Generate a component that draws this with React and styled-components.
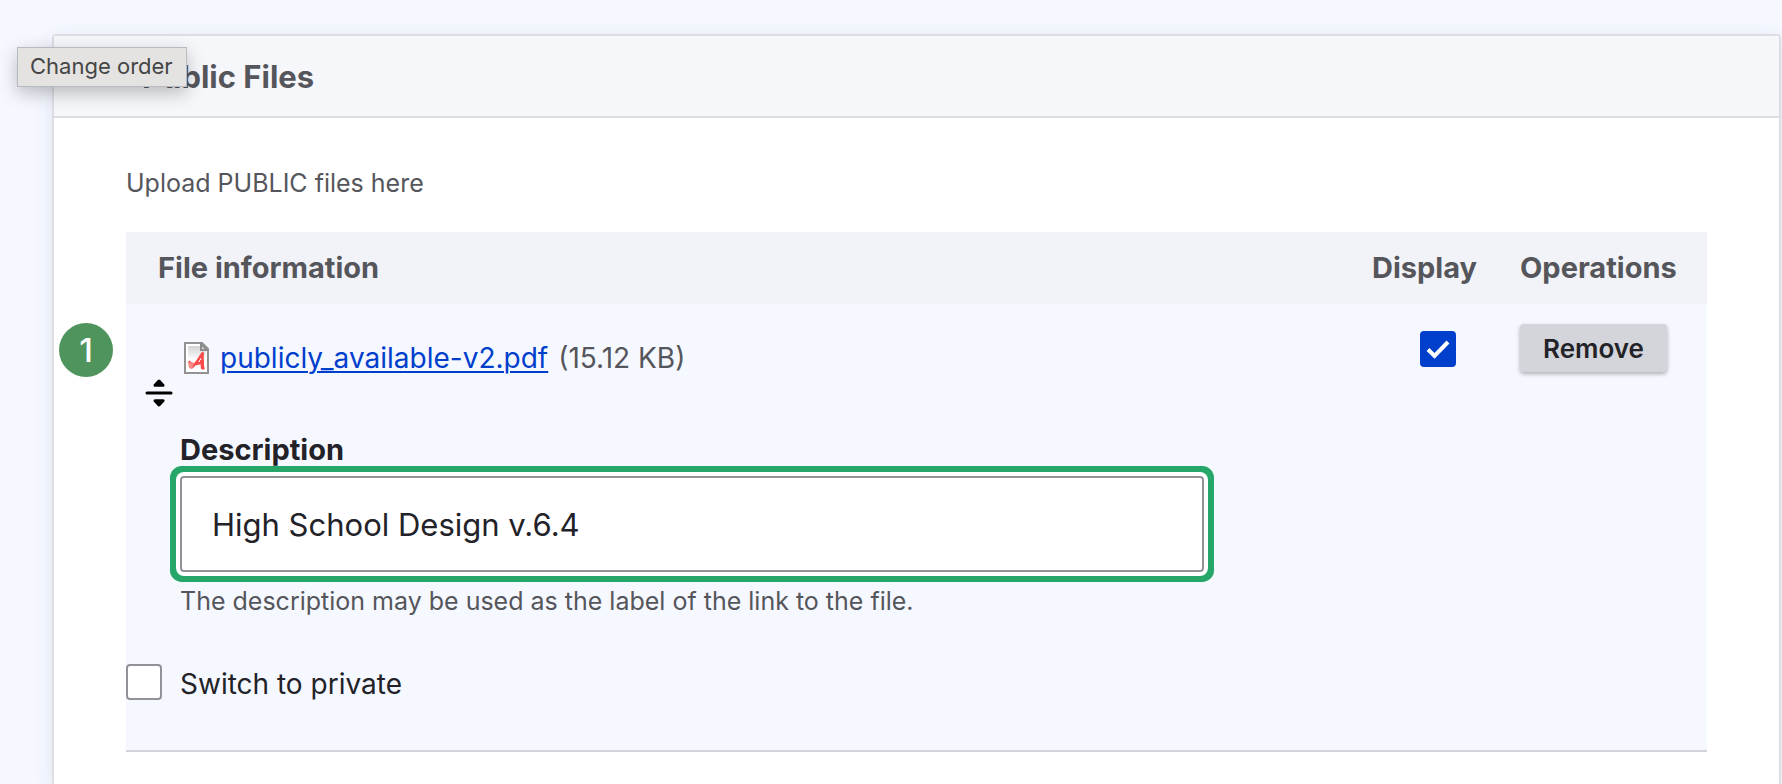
import React, { useState } from "react";
import styled, { createGlobalStyle } from "styled-components";

const colors = {
  page: "#f5f8ff",
  dark: "#222228",
  muted: "#55565b",
  border: "#dcdee4",
  line: "#d3d4d9",
  link: "#003ecc",
  focus: "#26a769",
};

const GlobalStyle = createGlobalStyle`
  * {
    box-sizing: border-box;
  }

  body {
    margin: 0;
    background: ${colors.page};
    color: ${colors.dark};
    font-family: Inter, "Liberation Sans", sans-serif;
  }
`;

const Page = styled.div`
  display: flex;
  min-height: 100vh;
  padding: 34px 1px 0 52px;
`;

const Card = styled.section`
  flex: 1;
  background: #fff;
  border: 2px solid ${colors.border};
  border-bottom: 0;
  border-radius: 4px 4px 0 0;
  box-shadow: 0 4px 20px rgba(50, 60, 110, 0.1);
`;

const CardHeader = styled.header`
  padding: 21px 88px 19px;
  background: #f6f7fa;
  border-bottom: 2px solid ${colors.border};
  border-radius: 2px 2px 0 0;
`;

const Title = styled.h2`
  margin: 0;
  color: ${colors.muted};
  font-size: 31px;
  line-height: 40px;
`;

const CardBody = styled.div`
  padding: 48px 72px 32px;
`;

const Intro = styled.p`
  margin: 0 0 32px;
  color: ${colors.muted};
  font-size: 25px;
  line-height: 34px;
`;

const Tooltip = styled.div`
  position: absolute;
  top: 47px;
  left: 17px;
  padding: 3px 13px 5px 12px;
  background: #e4e3e1;
  border: 1px solid #b9bac0;
  box-shadow: 0 6px 18px rgba(0, 0, 0, 0.25);
  color: #454545;
  font-size: 22px;
  line-height: 30px;
`;

const FileTable = styled.table`
  width: 100%;
  table-layout: fixed;
  border-collapse: collapse;
`;

const Col = styled.col`
  width: ${(props) => props.$width || "auto"};
`;

const HeadCell = styled.th`
  height: 72px;
  padding: 0 0 0 ${(props) => (props.$first ? "32px" : "0")};
  background: #f2f3f8;
  color: ${colors.muted};
  font-size: 29px;
  line-height: 36px;
  text-align: left;
`;

const Row = styled.tr`
  background: ${colors.page};
  border-bottom: 2px solid ${colors.line};
`;

const Cell = styled.td`
  position: relative;
  padding: ${(props) => props.$pad};
  vertical-align: top;
`;

const Badge = styled.span`
  position: absolute;
  top: 19px;
  left: -67px;
  width: 54px;
  height: 54px;
  border-radius: 50%;
  background: #4f945c;
  color: #fff;
  font-size: 33px;
  font-weight: 500;
  line-height: 54px;
  text-align: center;
`;

const FileGrid = styled.div`
  display: grid;
  grid-template-columns: 54px 1fr;
`;

const DragHandle = styled.button`
  width: 28px;
  height: 28px;
  margin: 39px 0 0 19px;
  padding: 0;
  border: 0;
  background: none;
  cursor: move;

  svg {
    display: block;
  }
`;

const FileLine = styled.div`
  display: flex;
  align-items: center;
  gap: 10px;
  height: 36px;
  margin-bottom: 56px;
  padding-left: 4px;
  color: ${colors.muted};
  font-size: 28px;
`;

const FileLink = styled.a`
  color: ${colors.link};
  text-decoration-thickness: 2px;
  text-underline-offset: 3px;
`;

const Label = styled.label`
  display: block;
  margin-bottom: 8px;
  font-size: 29px;
  font-weight: 700;
  line-height: 36px;
`;

const TextInput = styled.input`
  display: block;
  width: 100%;
  max-width: 1024px;
  height: 96px;
  padding: 0 30px;
  border: 2px solid #919197;
  border-radius: 4px;
  outline: 0;
  background: #fff;
  box-shadow: 0 0 0 4px #fff, 0 0 0 10px ${colors.focus};
  color: ${colors.dark};
  font: 31px Inter, "Liberation Sans", sans-serif;
`;

const Hint = styled.p`
  margin: 12px 0 0;
  color: ${colors.muted};
  font-size: 25px;
  line-height: 34px;
`;

const SwitchLine = styled.div`
  display: flex;
  align-items: flex-start;
  gap: 18px;
  margin-top: 46px;
  font-size: 28px;
  line-height: 40px;
`;

const CheckBox = styled.input`
  display: block;
  appearance: none;
  width: 36px;
  height: 36px;
  margin: 0;
  border: 2px solid #919197;
  border-radius: 4px;
  background: #fff;

  &:checked {
    border-color: ${colors.link};
    background: ${colors.link};
  }
`;

const CheckHolder = styled.label`
  display: grid;
  width: 36px;

  > * {
    grid-area: 1 / 1;
  }

  svg {
    pointer-events: none;
  }
`;

const RemoveButton = styled.button`
  height: 48px;
  padding: 0 23px;
  border: 0;
  border-radius: 4px;
  background: #d4d5da;
  box-shadow: 0 2px 4px rgba(0, 0, 0, 0.3);
  color: ${colors.dark};
  font: 600 26px Inter, "Liberation Sans", sans-serif;
  cursor: pointer;
`;

function MoveIcon() {
  return (
    <svg width="28" height="28" viewBox="0 0 28 28" aria-hidden="true">
      <path
        d="M2 14h24M10 6.3 14 2l4 4.3zM10 21.7 14 26l4-4.3z"
        fill="#000"
        stroke="#000"
        strokeWidth="3"
        strokeLinecap="round"
        strokeLinejoin="round"
      />
    </svg>
  );
}

function PdfIcon() {
  return (
    <svg width="26" height="32" viewBox="0 0 26 32" aria-hidden="true">
      <defs>
        <linearGradient id="sheet" x1="0" y1="0" x2="0" y2="1">
          <stop offset="0" stopColor="#d4d4d4" />
          <stop offset="0.6" stopColor="#fff" />
        </linearGradient>
      </defs>
      <path d="M1 1h17l6 6v24H1z" fill="#fff" stroke="#929292" strokeWidth="2" />
      <path d="M4 4h12v5h6v19H4z" fill="url(#sheet)" />
      <path d="M17 2v6h6z" fill="#ddd" stroke="#8c8c8c" strokeWidth="2" />
      <path
        d="M19.5 10.5C16 13 14 21 7 26M4.5 19.5C9 24 12 22 18 20.5M18.5 12v10.5l1 5"
        fill="none"
        stroke="#f84a4a"
        strokeWidth="2.6"
      />
      <path d="m4 20 6 1-2 6-3-1z" fill="#f98a8a" />
      <path d="M16 18h4v9h-3z" fill="#f84a4a" />
    </svg>
  );
}

function DisplayCheck() {
  const [checked, setChecked] = useState(true);

  return (
    <CheckHolder>
      <CheckBox
        type="checkbox"
        aria-label="Display"
        checked={checked}
        onChange={() => setChecked(!checked)}
      />
      {checked && (
        <svg width="36" height="36" viewBox="0 0 36 36" aria-hidden="true">
          <path d="m8 18.5 6.5 6.5L28 11" fill="none" stroke="#fff" strokeWidth="4" />
        </svg>
      )}
    </CheckHolder>
  );
}

function App() {
  const [description, setDescription] = useState("High School Design v.6.4");

  return (
    <>
      <GlobalStyle />
      <Page>
        <Card>
          <CardHeader>
            <Title>Public Files</Title>
          </CardHeader>
          <CardBody>
            <Intro>Upload PUBLIC files here</Intro>
            <FileTable>
              <colgroup>
                <Col />
                <Col $width="148px" />
                <Col $width="187px" />
              </colgroup>
              <thead>
                <tr>
                  <HeadCell $first>File information</HeadCell>
                  <HeadCell>Display</HeadCell>
                  <HeadCell>Operations</HeadCell>
                </tr>
              </thead>
              <tbody>
                <Row>
                  <Cell $pad="36px 0 46px">
                    <Badge>1</Badge>
                    <FileGrid>
                      <DragHandle type="button" aria-label="Change order">
                        <MoveIcon />
                      </DragHandle>
                      <div>
                        <FileLine>
                          <PdfIcon />
                          <FileLink href="#file">publicly_available-v2.pdf</FileLink>
                          <span>(15.12 KB)</span>
                        </FileLine>
                        <Label htmlFor="description">Description</Label>
                        <TextInput
                          id="description"
                          type="text"
                          value={description}
                          onChange={(e) => setDescription(e.target.value)}
                        />
                        <Hint>The description may be used as the label of the link to the file.</Hint>
                      </div>
                    </FileGrid>
                    <SwitchLine>
                      <CheckBox id="private" type="checkbox" />
                      <label htmlFor="private">Switch to private</label>
                    </SwitchLine>
                  </Cell>
                  <Cell $pad="27px 0 0 48px">
                    <DisplayCheck />
                  </Cell>
                  <Cell $pad="20px 0 0">
                    <RemoveButton type="button">Remove</RemoveButton>
                  </Cell>
                </Row>
              </tbody>
            </FileTable>
          </CardBody>
        </Card>
      </Page>
      <Tooltip role="tooltip">Change order</Tooltip>
    </>
  );
}

export default App;
